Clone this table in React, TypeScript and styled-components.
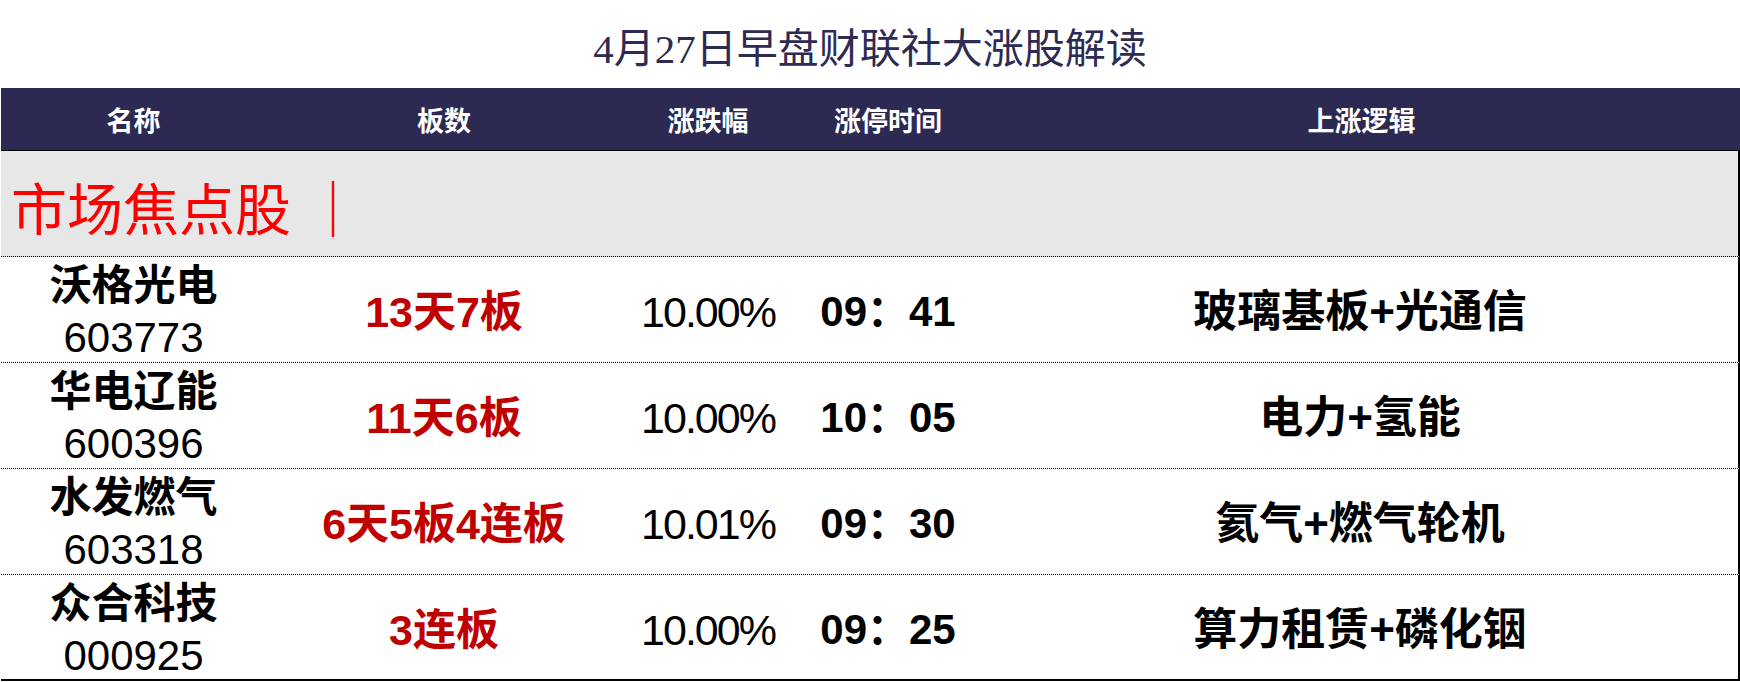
import styled, { createGlobalStyle } from 'styled-components';

const GlobalStyle = createGlobalStyle`
  html, body {
    margin: 0;
    padding: 0;
    background: #ffffff;
  }
  body {
    font-family: 'Liberation Sans', 'Noto Sans CJK SC', sans-serif;
  }
`;

const COLS = '265px 356px 172px 188px 1fr';

const Page = styled.div`
  width: 1740px;
  height: 682px;
  overflow: hidden;
`;

const Title = styled.h1`
  margin: 0;
  height: 88px;
  display: flex;
  align-items: center;
  justify-content: center;
  padding-top: 2px;
  box-sizing: border-box;
  font-family: 'Liberation Serif', 'Noto Sans CJK SC', serif;
  font-weight: 400;
  font-size: 41px;
  color: #2d2b53;
`;

const Table = styled.div`
  margin-left: 1px;
  width: 1739px;
`;

const HeadRow = styled.div`
  display: grid;
  grid-template-columns: ${COLS};
  height: 63px;
  background: #2c2a52;
  border-bottom: 1px solid #000;
  box-sizing: border-box;
  margin-right: -1px;
`;

const HeadCell = styled.div`
  display: flex;
  align-items: center;
  justify-content: center;
  color: #ffffff;
  font-family: 'Noto Sans CJK SC', sans-serif;
  font-weight: 700;
  font-size: 27px;
`;

const SectionRow = styled.div`
  height: 106px;
  box-sizing: border-box;
  background: #e7e7e7;
  border-right: 2px solid #000;
  border-bottom: 1px dotted #000;
  display: flex;
  align-items: center;
  padding: 4px 0 0 10px;
`;

const SectionTitle = styled.span`
  font-family: 'Liberation Serif', 'Noto Sans CJK SC', serif;
  font-size: 56px;
  color: #ff0000;
  white-space: pre;
`;

const Row = styled.div<{ $last?: boolean }>`
  display: grid;
  grid-template-columns: ${COLS};
  height: 106px;
  box-sizing: border-box;
  border-right: 2px solid #000;
  border-bottom: ${(p) => (p.$last ? '2px solid #000' : '1px dotted #000')};
`;

const Cell = styled.div<{ $red?: boolean; $bold?: boolean; $size?: number; $tight?: boolean }>`
  display: flex;
  flex-direction: column;
  align-items: center;
  justify-content: center;
  padding-top: 3px;
  font-size: ${(p) => p.$size ?? 42}px;
  line-height: 52px;
  letter-spacing: ${(p) => (p.$tight ? '-2px' : 'normal')};
  font-weight: ${(p) => (p.$bold ? 700 : 400)};
  color: ${(p) => (p.$red ? '#c00000' : '#000000')};
  white-space: nowrap;
`;

const Name = styled.span`
  font-weight: 700;
`;

const stocks = [
  { name: '沃格光电', code: '603773', board: '13天7板', pct: '10.00%', time: '09：41', logic: '玻璃基板+光通信' },
  { name: '华电辽能', code: '600396', board: '11天6板', pct: '10.00%', time: '10：05', logic: '电力+氢能' },
  { name: '水发燃气', code: '603318', board: '6天5板4连板', pct: '10.01%', time: '09：30', logic: '氦气+燃气轮机' },
  { name: '众合科技', code: '000925', board: '3连板', pct: '10.00%', time: '09：25', logic: '算力租赁+磷化铟' },
];

const headers = ['名称', '板数', '涨跌幅', '涨停时间', '上涨逻辑'];

export default function App() {
  return (
    <Page>
      <GlobalStyle />
      <Title>4月27日早盘财联社大涨股解读</Title>
      <Table>
        <HeadRow>
          {headers.map((h) => (
            <HeadCell key={h}>{h}</HeadCell>
          ))}
        </HeadRow>
        <SectionRow>
          <SectionTitle>市场焦点股 ｜</SectionTitle>
        </SectionRow>
        {stocks.map((s, i) => (
          <Row key={s.code} $last={i === stocks.length - 1}>
            <Cell>
              <Name>{s.name}</Name>
              <span>{s.code}</span>
            </Cell>
            <Cell $red $bold $size={43}>
              {s.board}
            </Cell>
            <Cell $tight $size={43}>
              {s.pct}
            </Cell>
            <Cell $bold>{s.time}</Cell>
            <Cell $bold $size={44}>
              {s.logic}
            </Cell>
          </Row>
        ))}
      </Table>
    </Page>
  );
}
